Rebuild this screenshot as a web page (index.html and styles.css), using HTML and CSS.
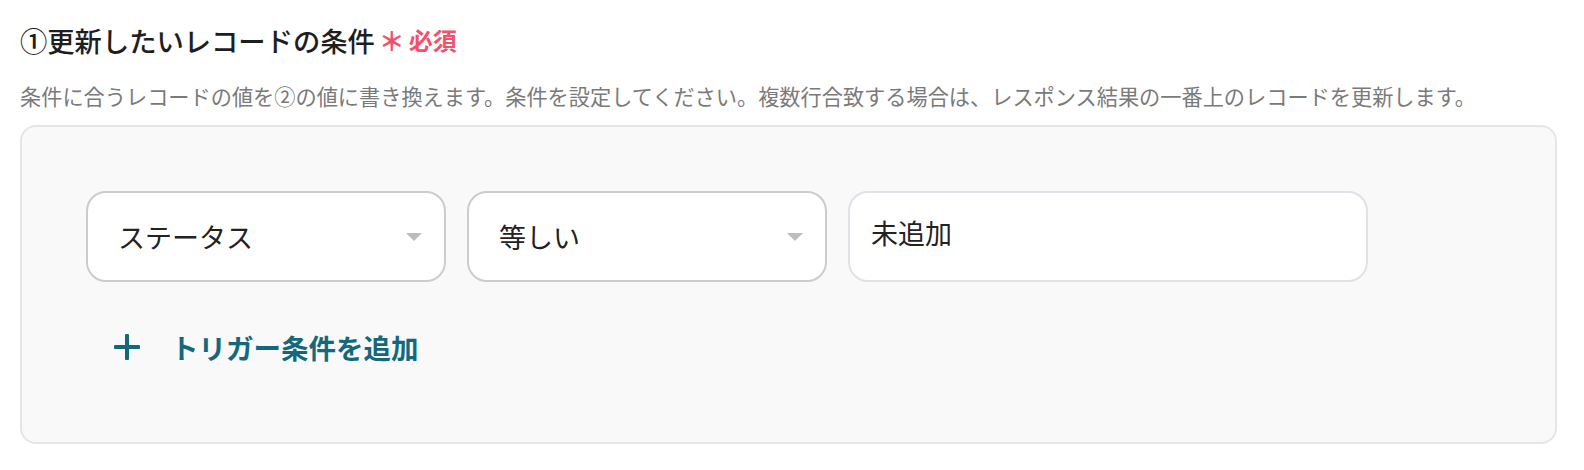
FILE: index.html
```html
<!DOCTYPE html>
<html lang="ja">
<head>
<meta charset="utf-8">
<link rel="stylesheet" href="styles.css">
</head>
<body>
<div class="page">
  <div class="title-row">
    <span class="title">①更新したいレコードの条件</span>
    <span class="req-mark">＊</span>
    <span class="req">必須</span>
  </div>
  <p class="desc">条件に合うレコードの値を②の値に書き換えます。条件を設定してください。複数行合致する場合は、レスポンス結果の一番上のレコードを更新します。</p>
  <div class="panel">
    <div class="cond-row">
      <div class="select select-field">
        <span class="select-text">ステータス</span>
        <span class="caret"></span>
      </div>
      <div class="select select-op">
        <span class="select-text">等しい</span>
        <span class="caret"></span>
      </div>
      <div class="input">未追加</div>
    </div>
    <div class="add-row">
      <svg class="plus" width="26" height="26" viewBox="0 0 26 26"><path d="M13 1.5V24.5M1.5 13H24.5" stroke="#14687c" stroke-width="4" stroke-linecap="round" fill="none"/></svg>
      <span class="add-text">トリガー条件を追加</span>
    </div>
  </div>
</div>
</body>
</html>
```

FILE: styles.css
```css
html, body {
  margin: 0;
  padding: 0;
  background: #ffffff;
}
body {
  font-family: "Noto Sans CJK JP", "Noto Sans", sans-serif;
  color: #222222;
}
.page {
  padding: 20px 27px 0 20px;
}
.title-row {
  display: flex;
  align-items: center;
  height: 40px;
}
.title {
  font-size: 27.3px;
  font-weight: 500;
  color: #1e1e1e;
  line-height: 40px;
}
.req-mark {
  color: #f2506b;
  font-size: 26px;
  font-weight: 700;
  margin-left: 4px;
  line-height: 40px;
  width: 20px;
  overflow: visible;
}
.req {
  color: #f2506b;
  font-size: 24px;
  font-weight: 700;
  margin-left: 10px;
  line-height: 40px;
}
.desc {
  margin: 22px 0 0 0;
  font-size: 21.2px;
  line-height: 28px;
  color: #7a7a7a;
  white-space: nowrap;
}
.panel {
  margin-top: 15px;
  background: #f9f9f9;
  border: 2px solid #e6e6e6;
  border-radius: 16px;
  height: 319px;
  box-sizing: border-box;
  padding: 64px 64px 0 64px;
}
.cond-row {
  display: flex;
  gap: 21px;
}
.select {
  width: 360px;
  height: 91px;
  box-sizing: border-box;
  background: #ffffff;
  border: 2px solid #cccccc;
  border-radius: 20px;
  display: flex;
  align-items: center;
  justify-content: space-between;
  padding: 0 22px 0 30px;
}
.select-text {
  font-size: 27px;
  color: #222222;
}
.caret {
  width: 0;
  height: 0;
  border-left: 8px solid transparent;
  border-right: 8px solid transparent;
  border-top: 8px solid #bdbdbd;
}
.input {
  width: 520px;
  height: 91px;
  box-sizing: border-box;
  background: #ffffff;
  border: 2px solid #dfe2e6;
  border-radius: 20px;
  padding: 20px 20px 0 21px;
  font-size: 27px;
  line-height: 40px;
  color: #222222;
}
.add-row {
  display: flex;
  align-items: center;
  margin-top: 41px;
  height: 48px;
  padding-left: 28px;
  gap: 31px;
}
.plus {
  display: block;
}
.add-text {
  font-size: 27.5px;
  font-weight: 700;
  color: #14687c;
}
```
